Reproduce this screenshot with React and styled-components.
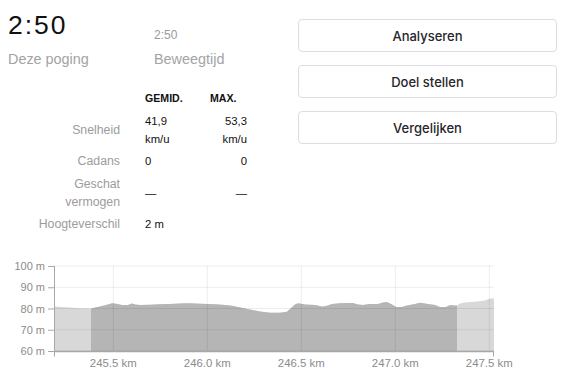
import React from "react";
import styled, { createGlobalStyle } from "styled-components";

const GlobalStyle = createGlobalStyle`
  html, body { margin: 0; padding: 0; background: #fff; }
  body { font-family: "Liberation Sans", Arial, sans-serif; color: #111; }
  * { box-sizing: border-box; }
`;

const Page = styled.div`
  width: 569px;
  height: 368px;
  overflow: hidden;
  display: flex;
  flex-direction: column;
`;

const Top = styled.div`
  height: 250px;
  display: flex;
  justify-content: space-between;
  padding: 0 12px 0 8px;
`;

const LeftCol = styled.div`
  width: 280px;
  padding-top: 10px;
`;

const StatRow = styled.div`
  display: flex;
  align-items: flex-end;
`;

const Stat = styled.div`
  width: ${(p) => p.$width || "auto"};
  display: flex;
  flex-direction: column;
`;

const BigValue = styled.div`
  font-size: 26.5px;
  line-height: 30px;
  letter-spacing: 2px;
  color: #111;
  margin-bottom: 10px;
`;

const SmallValue = styled.div`
  font-size: 12px;
  line-height: 16px;
  color: #9a9a9a;
  margin-bottom: 7px;
`;

const StatLabel = styled.div`
  font-size: 14.4px;
  line-height: 18px;
  color: #a3a3a3;
`;

const Table = styled.div`
  margin-top: 21px;
  display: grid;
  grid-template-columns: 112px 40px 37px;
  column-gap: 25px;
  row-gap: 4.5px;
  align-items: center;
`;

const HeadCell = styled.div`
  font-size: 10.6px;
  font-weight: 700;
  line-height: 18px;
  color: #111;
  white-space: nowrap;
`;

const Label = styled.div`
  font-size: 12.3px;
  line-height: 18px;
  color: #9c9c9c;
  text-align: right;
`;

const Value = styled.div`
  font-size: 11.3px;
  line-height: 18px;
  color: #111;
  text-align: ${(p) => (p.$right ? "right" : "left")};
  white-space: nowrap;
`;

const RightCol = styled.div`
  width: 259px;
  padding-top: 19px;
  display: flex;
  flex-direction: column;
  gap: 13px;
`;

const Button = styled.button`
  height: 33px;
  width: 100%;
  background: #fff;
  border: 1px solid #dddde2;
  border-radius: 4px;
  font-family: Inter, "Liberation Sans", Arial, sans-serif;
  font-size: 13px;
  font-weight: 500;
  color: #26262b;
  cursor: pointer;
  padding: 0;
`;

const ChartSvg = styled.svg`
  display: block;
  overflow: visible;
  font-family: "Liberation Sans", Arial, sans-serif;
`;

const profile = [
  [54, 306.5], [70, 307.5], [80, 308.3], [91, 308.5], [100, 306.5], [108, 304.5],
  [112, 303.2], [116, 303.8], [122, 305], [128, 305], [132, 303.5], [135, 304.5],
  [140, 305], [150, 304.8], [160, 304.3], [170, 304], [180, 303.5], [188, 303.3],
  [195, 303.6], [207, 304], [215, 304.3], [225, 305], [232, 305.8], [240, 307.5],
  [250, 309.5], [260, 311.5], [270, 312.8], [280, 312.7], [287, 311.8], [290, 309],
  [295, 304.5], [298, 303.3], [305, 304.5], [315, 305], [322, 306.5], [326, 306],
  [332, 304], [340, 303.2], [348, 303], [353, 303], [358, 304.5], [363, 305],
  [370, 304], [378, 304], [383, 302.5], [387, 302], [392, 304.5], [396, 307],
  [402, 307], [407, 305.5], [415, 304], [420, 302.8], [428, 304], [435, 305],
  [440, 307], [446, 307], [450, 305], [454, 305.5], [457, 305.5], [460, 303.5],
  [466, 302.3], [475, 301.8], [485, 300.5], [490, 298.5], [494, 298.5],
];

const X0 = 54;
const X1 = 494;
const Y0 = 266;
const Y1 = 351;

const areaPath =
  "M" + X0 + "," + Y1 + " " +
  profile.map(([x, y]) => "L" + x + "," + y).join(" ") +
  " L" + X1 + "," + Y1 + " Z";

const yTicks = [
  { v: "100 m", y: 266 },
  { v: "90 m", y: 287.25 },
  { v: "80 m", y: 308.5 },
  { v: "70 m", y: 329.75 },
  { v: "60 m", y: 351 },
];

const xTicks = [
  { v: "245.5 km", x: 113.3 },
  { v: "246.0 km", x: 207.3 },
  { v: "246.5 km", x: 301.3 },
  { v: "247.0 km", x: 395.3 },
  { v: "247.5 km", x: 489.3 },
];

function ElevationChart() {
  return (
    <ChartSvg width="569" height="118" viewBox="0 250 569 118">
      <defs>
        <clipPath id="sel">
          <rect x="91" y="250" width="366" height="110" />
        </clipPath>
      </defs>
      <path d={areaPath} fill="#d8d8d8" />
      <path d={areaPath} fill="#b5b5b5" clipPath="url(#sel)" />
      {yTicks.map((t) => (
        <line key={t.v} x1={X0} x2={X1} y1={t.y} y2={t.y} stroke="rgba(0,0,0,0.075)" strokeWidth="1" />
      ))}
      {xTicks.map((t) => (
        <line key={t.v} x1={t.x} x2={t.x} y1={Y0} y2={Y1} stroke="rgba(0,0,0,0.075)" strokeWidth="1" />
      ))}
      <line x1={X0 + 0.5} x2={X0 + 0.5} y1={Y0} y2={Y1 + 5.5} stroke="#a8a8a8" strokeWidth="1" />
      <line x1={X0} x2={X1} y1={Y1 + 0.5} y2={Y1 + 0.5} stroke="#a8a8a8" strokeWidth="1.5" />
      <line x1={X1 - 0.5} x2={X1 - 0.5} y1={Y1} y2={Y1 + 5.5} stroke="#a8a8a8" strokeWidth="1" />
      {yTicks.map((t) => (
        <g key={t.v}>
          <line x1="48" x2={X0} y1={t.y + 0.5} y2={t.y + 0.5} stroke="#a8a8a8" strokeWidth="1" />
          <text x="45" y={t.y + 4} textAnchor="end" fontSize="11" fill="#8c8c8c">{t.v}</text>
        </g>
      ))}
      {xTicks.map((t) => (
        <text key={t.v} x={t.x} y="366.5" textAnchor="middle" fontSize="11.4" fill="#8c8c8c">{t.v}</text>
      ))}
    </ChartSvg>
  );
}

const rows = [
  { label: ["Snelheid"], avg: ["41,9", "km/u"], max: ["53,3", "km/u"] },
  { label: ["Cadans"], avg: ["0"], max: ["0"] },
  { label: ["Geschat", "vermogen"], avg: ["—"], max: ["—"] },
  { label: ["Hoogteverschil"], avg: ["2 m"], max: [] },
];

export default function App() {
  return (
    <>
      <GlobalStyle />
      <Page>
        <Top>
          <LeftCol>
            <StatRow>
              <Stat $width="146px">
                <BigValue>2:50</BigValue>
                <StatLabel>Deze poging</StatLabel>
              </Stat>
              <Stat>
                <SmallValue>2:50</SmallValue>
                <StatLabel>Beweegtijd</StatLabel>
              </Stat>
            </StatRow>
            <Table>
              <div />
              <HeadCell>GEMID.</HeadCell>
              <HeadCell>MAX.</HeadCell>
              {rows.map((r) => (
                <React.Fragment key={r.label.join(" ")}>
                  <Label>
                    {r.label.map((l) => (
                      <div key={l}>{l}</div>
                    ))}
                  </Label>
                  <Value>
                    {r.avg.map((v) => (
                      <div key={v}>{v}</div>
                    ))}
                  </Value>
                  <Value $right>
                    {r.max.map((v) => (
                      <div key={v}>{v}</div>
                    ))}
                  </Value>
                </React.Fragment>
              ))}
            </Table>
          </LeftCol>
          <RightCol>
            <Button>Analyseren</Button>
            <Button>Doel stellen</Button>
            <Button>Vergelijken</Button>
          </RightCol>
        </Top>
        <ElevationChart />
      </Page>
    </>
  );
}
